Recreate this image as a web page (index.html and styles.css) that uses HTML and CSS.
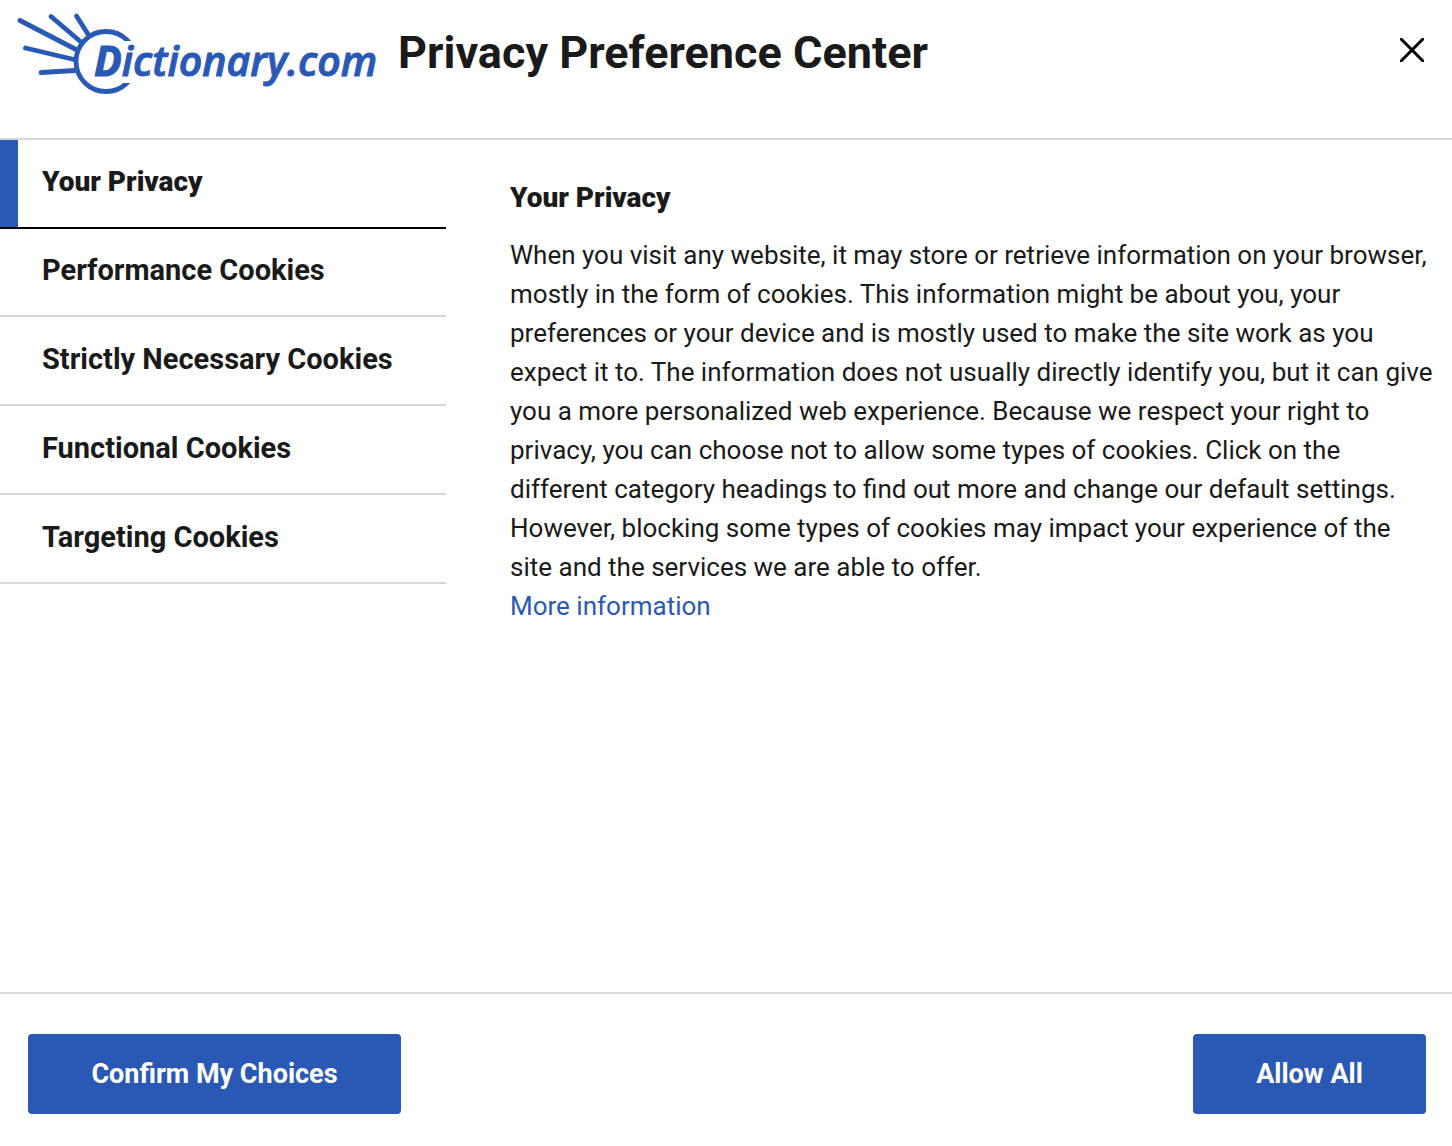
FILE: index.html
```html
<!DOCTYPE html>
<html lang="en">
<head>
<meta charset="utf-8">
<meta name="viewport" content="width=device-width, initial-scale=1">
<title>Privacy Preference Center</title>
<link rel="stylesheet" href="styles.css">
</head>
<body>
<div class="dialog" role="dialog" aria-labelledby="dialog-title">
  <header class="dialog-header">
    <svg class="logo" viewBox="0 0 364 84" role="img" aria-label="Dictionary.com">
      <clipPath id="ring-gap"><path d="M0 0H120V29H100V71H120V84H0Z"/></clipPath>
      <g fill="none" stroke="currentColor" stroke-width="4.8">
        <circle cx="90" cy="49.5" r="30" clip-path="url(#ring-gap)"/>
        <path stroke-linecap="round" d="M4 8.500 60 37.500M35 4.500 65 30M60.500 4 72.500 23M9.500 36 58 47.500M25 60.500 59 58.500"/>
      </g>
      <text class="logo-text" x="78" y="64"><tspan class="logo-initial">D</tspan>ictionary.com</text>
    </svg>
    <h1 class="dialog-title" id="dialog-title">Privacy Preference Center</h1>
    <button class="close" type="button" aria-label="Close">
      <svg viewBox="0 0 24 24" width="24" height="24"><path d="M1 1 23 23M23 1 1 23" fill="none" stroke="currentColor" stroke-width="3" stroke-linecap="round"/></svg>
    </button>
  </header>
  <main class="dialog-body">
    <nav class="tabs" aria-label="Cookie categories">
      <button class="tab tab-active" type="button">Your Privacy</button>
      <button class="tab" type="button">Performance Cookies</button>
      <button class="tab" type="button">Strictly Necessary Cookies</button>
      <button class="tab" type="button">Functional Cookies</button>
      <button class="tab" type="button">Targeting Cookies</button>
    </nav>
    <section class="panel">
      <h2 class="panel-title">Your Privacy</h2>
      <p class="panel-text">When you visit any website, it may store or retrieve information on your browser, mostly in the form of cookies. This information might be about you, your preferences or your device and is mostly used to make the site work as you expect it to. The information does not usually directly identify you, but it can give you a more personalized web experience. Because we respect your right to privacy, you can choose not to allow some types of cookies. Click on the different category headings to find out more and change our default settings. However, blocking some types of cookies may impact your experience of the site and the services we are able to offer.</p>
      <a class="more" href="#">More information</a>
    </section>
  </main>
  <footer class="dialog-footer">
    <button class="action action-confirm" type="button">Confirm My Choices</button>
    <button class="action action-allow" type="button">Allow All</button>
  </footer>
</div>
</body>
</html>
```
FILE: styles.css
```css
* { box-sizing: border-box; }

body {
  margin: 0;
  background: #fff;
  color: #1a1a1a;
  font-family: Roboto, "Liberation Sans", sans-serif;
}

.dialog {
  display: flex;
  flex-direction: column;
  min-height: 100vh;
}

.dialog-header {
  display: flex;
  align-items: flex-start;
  padding: 12px 28px 42px 16px;
  border-bottom: 2px solid #d8d8d8;
}

.logo {
  flex: none;
  width: 364px;
  height: 84px;
  overflow: visible;
  color: #2a59b5;
}

.logo-text {
  fill: currentColor;
  stroke: currentColor;
  stroke-width: 1px;
  font: italic 600 41px "Open Sans", "Noto Sans", sans-serif;
}

.logo-initial {
  font-weight: 700;
}

.dialog-title {
  margin: 13px 0 0 18px;
  font-size: 45px;
  line-height: 56px;
  font-weight: 700;
}

.close {
  display: flex;
  margin: 26px 0 0 auto;
  padding: 0;
  border: 0;
  background: none;
  color: #000;
  cursor: pointer;
}

.dialog-body {
  display: flex;
  flex: 1;
}

.tabs {
  display: flex;
  flex: none;
  flex-direction: column;
  width: 446px;
}

.tab {
  height: 89px;
  padding: 0 0 4px 42px;
  border: 0;
  border-bottom: 2px solid #d8d8d8;
  background: none;
  color: inherit;
  font: 700 29px Roboto, sans-serif;
  text-align: left;
  cursor: pointer;
}

.tab-active {
  border-bottom-color: #000;
  box-shadow: inset 18px 0 #2a59b5;
  font-size: 28px;
  font-weight: 900;
}

.tab-active + .tab { height: 88px; }

.panel {
  flex: 1;
  padding: 38px 16px 40px 64px;
  font-size: 26px;
  line-height: 39px;
}

.panel-title {
  margin: 0 0 19px;
  font-size: 28px;
  line-height: 39px;
  font-weight: 900;
}

.panel-text { margin: 0; }

.more {
  color: #2a59b5;
  text-decoration: none;
}

.dialog-footer {
  display: flex;
  justify-content: space-between;
  padding: 40px 26px 32px 28px;
  border-top: 2px solid #d8d8d8;
}

.action {
  height: 80px;
  padding: 0;
  border: 0;
  border-radius: 4px;
  background: #2a59b5;
  color: #fff;
  font: 700 27px Roboto, sans-serif;
  cursor: pointer;
}

.action-confirm { width: 373px; }
.action-allow { width: 233px; }
```
